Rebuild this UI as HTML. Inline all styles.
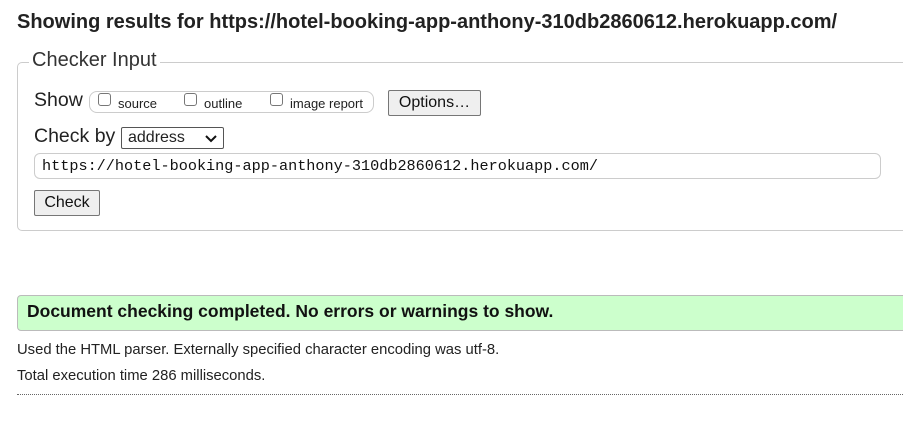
<!DOCTYPE html>
<html><head><meta charset="utf-8"><style>
body{margin:0;width:903px;height:433px;overflow:hidden;background:#fff;font-family:"Liberation Sans",Arial,sans-serif;color:#222;position:relative}
.a{position:absolute;white-space:nowrap}
h1{position:absolute;left:17px;top:11px;margin:0;font-size:20px;font-weight:bold;color:#222;white-space:nowrap}
.fs{position:absolute;left:17px;top:62px;width:900px;height:169px;border:1px solid #ccc;border-radius:5px;box-sizing:border-box}
.leg{position:absolute;left:29px;top:49px;background:#fff;padding:0 3px;font-size:20px;color:#333}
.pill{position:absolute;left:89px;top:91px;width:285px;height:22px;border:1px solid #ccc;border-radius:8px;box-sizing:border-box}
.cb{position:absolute;width:13px;height:13px;border:1px solid #777;border-radius:3px;box-sizing:border-box;background:#fff}
.btn{position:absolute;border:1px solid #767676;background:#efefef;border-radius:2px;box-sizing:border-box;font-size:16px;color:#111;text-align:center}
.sm{font-size:13px;color:#222}
</style></head><body>
<h1>Showing results for https://hotel-booking-app-anthony-310db2860612.herokuapp.com/</h1>
<div class="fs"></div>
<div class="leg">Checker Input</div>
<div class="a" style="left:34px;top:89px;font-size:19.5px">Show</div>
<div class="pill"></div>
<div class="cb" style="left:98px;top:93px"></div><div class="a sm" style="left:118px;top:96px">source</div>
<div class="cb" style="left:184px;top:93px"></div><div class="a sm" style="left:204px;top:96px">outline</div>
<div class="cb" style="left:270px;top:93px"></div><div class="a sm" style="left:290px;top:96px">image report</div>
<div class="btn" style="left:388px;top:90px;width:93px;height:26px;line-height:24px">Options…</div>
<div class="a" style="left:34px;top:125px;font-size:19.5px">Check by</div>
<div class="a" style="left:121px;top:127px;width:103px;height:22px;border:1px solid #555;box-sizing:border-box;border-radius:2px;font-size:16px;line-height:20px;padding-left:6px">address<svg style="position:absolute;right:6px;top:7px" width="12" height="8" viewBox="0 0 12 8"><path d="M1 1l5 5 5-5" fill="none" stroke="#111" stroke-width="2"/></svg></div>
<div class="a" style="left:34px;top:153px;width:847px;height:26px;border:1px solid #ccc;border-radius:6px;box-sizing:border-box;font-family:'Liberation Mono',monospace;font-size:15.2px;line-height:24px;padding-left:7px;color:#111">https://hotel-booking-app-anthony-310db2860612.herokuapp.com/</div>
<div class="btn" style="left:34px;top:190px;width:66px;height:26px;line-height:24px">Check</div>
<div class="a" style="left:17px;top:295px;width:900px;height:36px;background:#ccffcc;border:1px solid #bbb;border-radius:4px;box-sizing:border-box"></div>
<div class="a" style="left:27px;top:301px;font-size:17.5px;font-weight:bold;color:#111">Document checking completed. No errors or warnings to show.</div>
<div class="a" style="left:17px;top:342px;font-size:14.8px">Used the HTML parser. Externally specified character encoding was utf-8.</div>
<div class="a" style="left:17px;top:368px;font-size:14.8px">Total execution time 286 milliseconds.</div>
<div class="a" style="left:17px;top:394px;width:890px;border-top:1px dotted #666"></div>
</body></html>
